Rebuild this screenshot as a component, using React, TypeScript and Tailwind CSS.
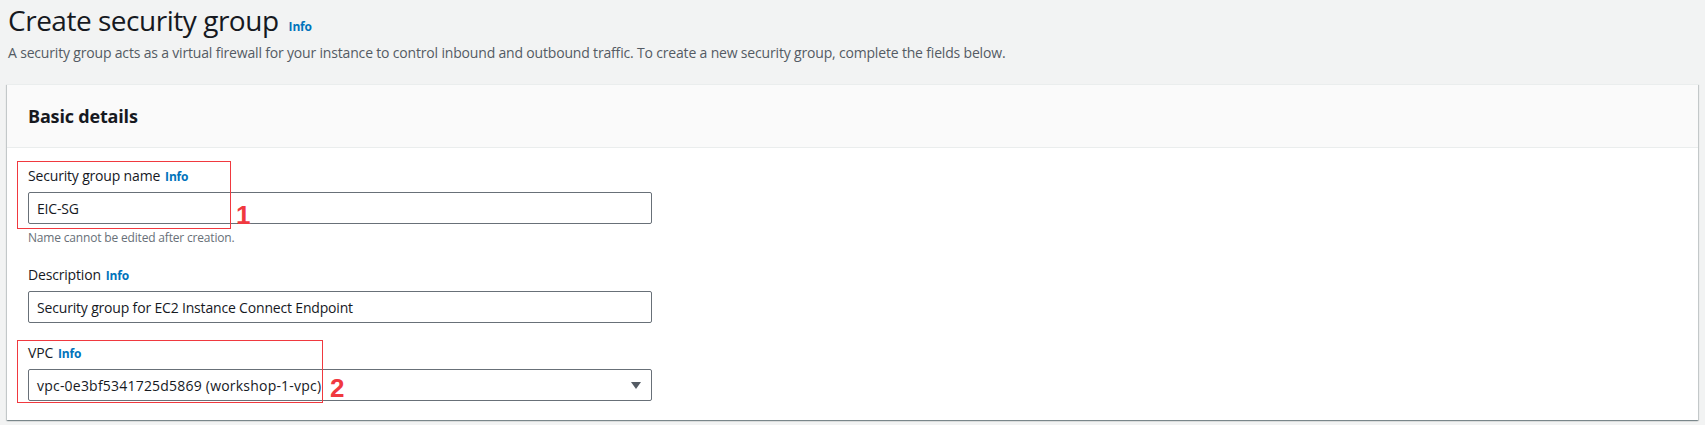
import * as React from "react";

// Create security group — Basic details form with red annotation boxes

const FONT = {
  fontFamily: '"Open Sans", "Noto Sans", Arial, sans-serif',
  letterSpacing: "-0.011em",
};

function InfoLink() {
  return <span className="ml-[5px] text-[12px] font-bold text-[#0073bb]">Info</span>;
}

function FieldLabel({ children }: { children: React.ReactNode }) {
  return (
    <div className="flex items-baseline text-[14px] leading-[20px] text-[#16191f]">
      {children}
      <InfoLink />
    </div>
  );
}

function Marker({ n }: { n: string }) {
  return (
    <span
      className="absolute text-[26px] font-bold leading-none tracking-normal text-[#f0393f]"
      style={{ fontFamily: '"Liberation Sans", Arial, sans-serif' }}
    >
      {n}
    </span>
  );
}

export default function App() {
  return (
    <div className="min-h-[425px] w-full bg-[#f2f3f3] text-[#16191f]" style={FONT}>
      {/* ── Page header ── */}
      <div className="px-[8px] pt-[2px]">
        <div className="flex items-baseline">
          <h1 className="text-[28px] leading-[36px] font-normal tracking-[-0.017em] text-[#16191f]">
            Create security group
          </h1>
          <span className="ml-[10px] text-[12px] font-bold text-[#0073bb]">Info</span>
        </div>
        <p className="mt-[5px] text-[14px] leading-[20px] text-[#545b64]">
          A security group acts as a virtual firewall for your instance to control inbound and
          outbound traffic. To create a new security group, complete the fields below.
        </p>
      </div>

      {/* ── Card ── */}
      <div className="mx-[7px] mt-[21px] bg-white border-t border-[#eaeded] shadow-[0_1px_1px_0_rgba(0,28,36,0.3),1px_1px_1px_0_rgba(0,28,36,0.15),-1px_1px_1px_0_rgba(0,28,36,0.15)]">
        <div className="h-[63px] flex items-center px-[21px] bg-[#fafafa] border-b border-[#eaeded]">
          <h2 className="text-[18px] font-bold leading-[22px] text-[#16191f]">Basic details</h2>
        </div>

        <div className="px-[21px] pt-[18px] pb-[19px]">
          {/* Security group name */}
          <div className="relative w-[624px]">
            <FieldLabel>Security group name</FieldLabel>
            <div className="mt-[5px] h-[32px] border border-[#687078] rounded-[2px] flex items-center px-[8px] text-[14px] text-[#16191f]">
              EIC-SG
            </div>
            <div className="absolute left-[-11px] top-[-5px] w-[214px] h-[68px] border border-[#f0393f]" />
            <div className="absolute left-[208px] top-[36px]">
              <Marker n="1" />
            </div>
            <div className="mt-[6px] text-[12px] leading-[16px] text-[#687078]">
              Name cannot be edited after creation.
            </div>
          </div>

          {/* Description */}
          <div className="mt-[19px] w-[624px]">
            <FieldLabel>Description</FieldLabel>
            <div className="mt-[5px] h-[32px] border border-[#687078] rounded-[2px] flex items-center px-[8px] text-[14px] text-[#16191f]">
              Security group for EC2 Instance Connect Endpoint
            </div>
          </div>

          {/* VPC */}
          <div className="relative mt-[20px] w-[624px]">
            <FieldLabel>VPC</FieldLabel>
            <div className="mt-[5px] h-[32px] border border-[#687078] rounded-[2px] flex items-center justify-between pl-[8px] pr-[10px] text-[14px] text-[#16191f]">
              <span className="tracking-[0.015em]">vpc-0e3bf5341725d5869 (workshop-1-vpc)</span>
              <svg width="10" height="7" viewBox="0 0 10 7" aria-hidden="true">
                <path d="M0 0 H10 L5 7 Z" fill="#545b64" />
              </svg>
            </div>
            <div className="absolute left-[-11px] top-[-3px] w-[306px] h-[63px] border border-[#f0393f]" />
            <div className="absolute left-[302px] top-[32px]">
              <Marker n="2" />
            </div>
          </div>
        </div>
      </div>
    </div>
  );
}
